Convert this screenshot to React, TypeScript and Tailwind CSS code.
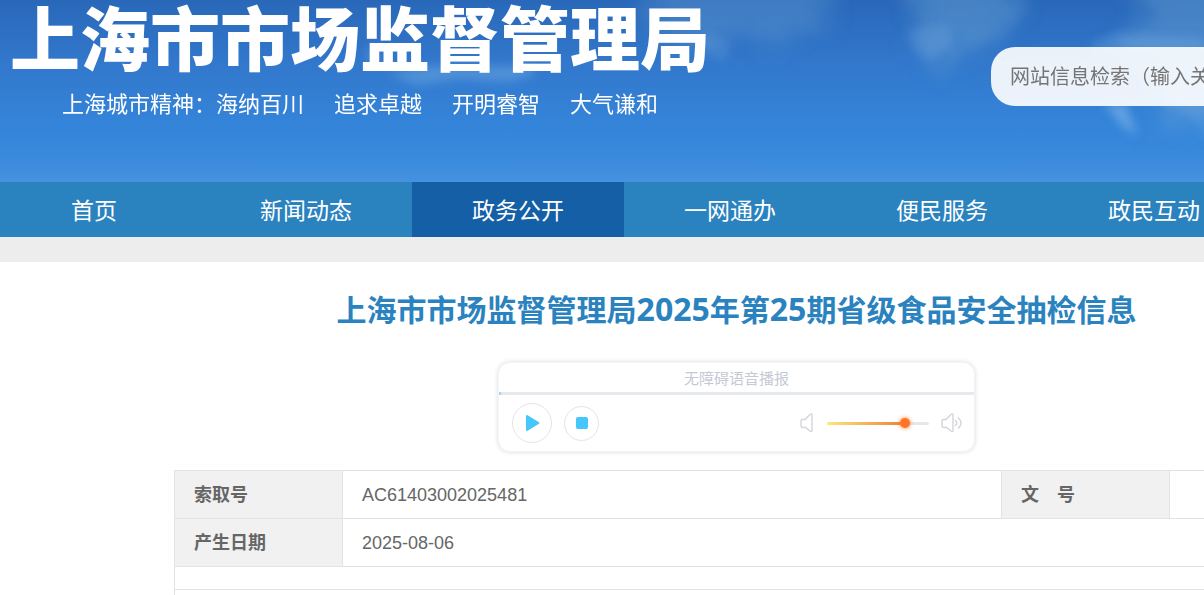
import React from "react";
import clsx from "clsx";

const navItems = [
  { label: "首页", href: "#home" },
  { label: "新闻动态", href: "#news" },
  { label: "政务公开", href: "#affairs", active: true },
  { label: "一网通办", href: "#service" },
  { label: "便民服务", href: "#convenience" },
  { label: "政民互动", href: "#interaction" },
];

const mottos = ["上海城市精神：海纳百川", "追求卓越", "开明睿智", "大气谦和"];

const Clouds = () => (
  <svg
    className="absolute inset-0 h-full w-full"
    viewBox="0 0 1473 182"
    preserveAspectRatio="xMinYMin slice"
    aria-hidden="true"
  >
    <defs>
      <filter id="soft" x="-20%" y="-50%" width="140%" height="200%">
        <feGaussianBlur stdDeviation="12" result="blurred" />
        <feTurbulence type="fractalNoise" baseFrequency="0.025" numOctaves="3" seed="4" />
        <feDisplacementMap in="blurred" scale="36" xChannelSelector="R" yChannelSelector="G" />
        <feGaussianBlur stdDeviation="3" />
      </filter>
      <filter id="wisp" x="-20%" y="-50%" width="140%" height="200%">
        <feGaussianBlur stdDeviation="5" />
      </filter>
    </defs>
    <g fill="#6fa6d2" filter="url(#soft)">
      <path d="M640 -40h200l-16 68-34 6-30 12-25-10-30 14-50-10z" opacity=".32" />
      <path d="M905 -40h110l-4 76-30 8-22 6-20 16-20-20z" opacity=".42" />
      <path d="M1130 -40h350v160h-320l-30-60-20-14 30-24z" opacity=".4" />
    </g>
    <g fill="#8fc0ec" filter="url(#wisp)">
      <path d="M706 34l22 6 2 18-12 4-14-12z" opacity=".16" />
      <path d="M906 30l44-4 4 18-26 16-14-10z" opacity=".2" />
      <path d="M388 74l40-8 100 0 10 8-30 8-50-3-40 6z" opacity=".32" />
      <path d="M366 50l10-8 4 24-12-2z" opacity=".25" />
      <path d="M1090 44l26-10 88 4v12h-110z" opacity=".25" />
      <path d="M1104 104l22 0 12 32-16-10z" opacity=".5" />
      <path d="M1160 100h50v46l-14-26-24-12z" opacity=".2" />
    </g>
  </svg>
);

const SpeakerShape = () => (
  <path d="M3.500 7.500H6L11 2.500Q13 1 13 3.500v15Q13 20.500 11 19L6.500 15.500H4Q2 15.500 2 13.500V9Q2 7.500 3.500 7.500z" />
);

const AudioPlayer = () => {
  const [volume, setVolume] = React.useState(79);

  return (
    <section className="mx-auto h-[90px] w-[477px] overflow-hidden rounded-xl border border-gray-100 bg-white shadow-[0_0_5px_rgba(0,0,0,0.14)]">
      <p className="h-[29px] text-center text-[15px] leading-[31px] text-[#c5c9d6]">
        无障碍语音播报
      </p>
      <div className="h-[3px] bg-[linear-gradient(to_right,#9fd4f2_1px,#e6eaef_3px)]" />
      <div className="flex h-14 items-center pr-2.5 pl-[13px]">
        <button
          type="button"
          aria-label="播放"
          className="flex size-10 items-center justify-center rounded-full border border-[#e4e4ea]"
        >
          <svg width="16" height="18" viewBox="0 0 16 18" fill="#46c7fb" className="ml-0.5">
            <path d="M1 2.200Q1 .4 2.600 1.300L14 8.200Q15 9 14 9.800L2.600 16.700Q1 17.600 1 15.800z" />
          </svg>
        </button>
        <button
          type="button"
          aria-label="停止"
          className="ml-3 flex size-[35px] items-center justify-center rounded-full border border-[#e4e4ea]"
        >
          <span className="size-3 rounded-xs bg-[#46c7fb]" />
        </button>
        <svg
          width="22"
          height="22"
          viewBox="0 0 22 22"
          className="ml-auto"
          fill="none"
          stroke="#d3d3da"
          strokeWidth="1.400"
          aria-hidden="true"
        >
          <SpeakerShape />
        </svg>
        <input
          type="range"
          aria-label="音量"
          min={0}
          max={100}
          value={volume}
          onChange={(e) => setVolume(+e.target.value)}
          className="mx-1.5 h-[3px] w-[102px] appearance-none rounded-full [&::-webkit-slider-thumb]:size-2.5 [&::-webkit-slider-thumb]:appearance-none [&::-webkit-slider-thumb]:rounded-full [&::-webkit-slider-thumb]:bg-[#ff7528] [&::-webkit-slider-thumb]:shadow-[0_0_4px_#ff7528]"
          style={{
            background: `linear-gradient(to right, #fbe77a, #ee7d35 ${volume}%, #e4e8ed ${volume}%)`,
          }}
        />
        <svg
          width="24"
          height="22"
          viewBox="0 0 24 22"
          className="ml-[5px]"
          fill="none"
          stroke="#d3d3da"
          strokeWidth="1.400"
          strokeLinecap="round"
          aria-hidden="true"
        >
          <SpeakerShape />
          <path d="M15.500 8.500q2.500 2.500 0 5M18.500 6q5 5 0 10" />
        </svg>
      </div>
    </section>
  );
};

const labelCell =
  "border border-[#e3e3e3] bg-[#f1f1f1] px-[19px] text-left font-bold";
const valueCell = "border border-[#e3e3e3] px-[19px]";

const InfoTable = () => (
  <table className="w-full table-fixed border-collapse text-lg leading-6 text-[#666]">
    <colgroup>
      <col className="w-[168px]" />
      <col className="w-[659px]" />
      <col className="w-[168px]" />
      <col />
    </colgroup>
    <tbody>
      <tr className="h-12">
        <th scope="row" className={labelCell}>
          索取号
        </th>
        <td className={valueCell}>AC61403002025481</td>
        <th scope="row" className={labelCell}>
          文　号
        </th>
        <td className={valueCell}></td>
      </tr>
      <tr className="h-12">
        <th scope="row" className={labelCell}>
          产生日期
        </th>
        <td className={valueCell} colSpan={3}>
          2025-08-06
        </td>
      </tr>
      <tr className="h-[23px]">
        <td className="border border-[#e3e3e3]" colSpan={4}></td>
      </tr>
    </tbody>
  </table>
);

const App = () => {
  return (
    <div className="overflow-hidden bg-white font-['Liberation_Sans','Noto_Sans_CJK_SC',sans-serif]">
      <div className="flex min-h-screen min-w-[1473px] flex-col">
        <header className="relative flex h-[182px] justify-between bg-[linear-gradient(to_bottom,#2968b9,#3278cc_35%,#3485da_70%,#3989dc_86%,#4592df)] pl-2.5">
          <Clouds />
          <div className="relative text-white">
            <p className="text-[70px] leading-[84px] font-black whitespace-nowrap">
              上海市市场监督管理局
            </p>
            <p className="ml-[52px] flex gap-[30px] text-[22px] leading-[42px]">
              {mottos.map((motto) => (
                <span key={motto}>{motto}</span>
              ))}
            </p>
          </div>
          <form className="relative mt-[47px] mr-[62px] w-[420px]">
            <input
              type="search"
              aria-label="网站信息检索"
              placeholder="网站信息检索（输入关键字）"
              className="h-[59px] w-full rounded-3xl bg-white/90 px-[19px] pt-0.5 text-xl placeholder:text-[#757575]"
            />
          </form>
        </header>

        <nav className="-ml-3 flex h-[55px] bg-[#2a83bf] text-[23px] leading-[58px] text-white">
          {navItems.map((item) => (
            <a
              key={item.href}
              href={item.href}
              className={clsx(
                "w-[212px] text-center",
                item.active && "bg-[#155fa7]"
              )}
            >
              {item.label}
            </a>
          ))}
        </nav>
        <div className="h-[25px] bg-[#ededed]" />

        <main className="mx-auto flex w-[1125px] flex-1 flex-col">
          <h1 className="mt-[22px] mb-[26px] text-center text-[30px] leading-[50px] font-bold text-[#2a83bf]">
            上海市市场监督管理局
            <span className="font-['Open_Sans'] text-[32px]">2025</span>年第
            <span className="font-['Open_Sans'] text-[32px]">25</span>
            期省级食品安全抽检信息
          </h1>
          <AudioPlayer />
          <div className="mt-[18px]">
            <InfoTable />
          </div>
          <div className="flex-1 border-x border-[#e3e3e3]" />
        </main>
      </div>
    </div>
  );
};

export default App;
